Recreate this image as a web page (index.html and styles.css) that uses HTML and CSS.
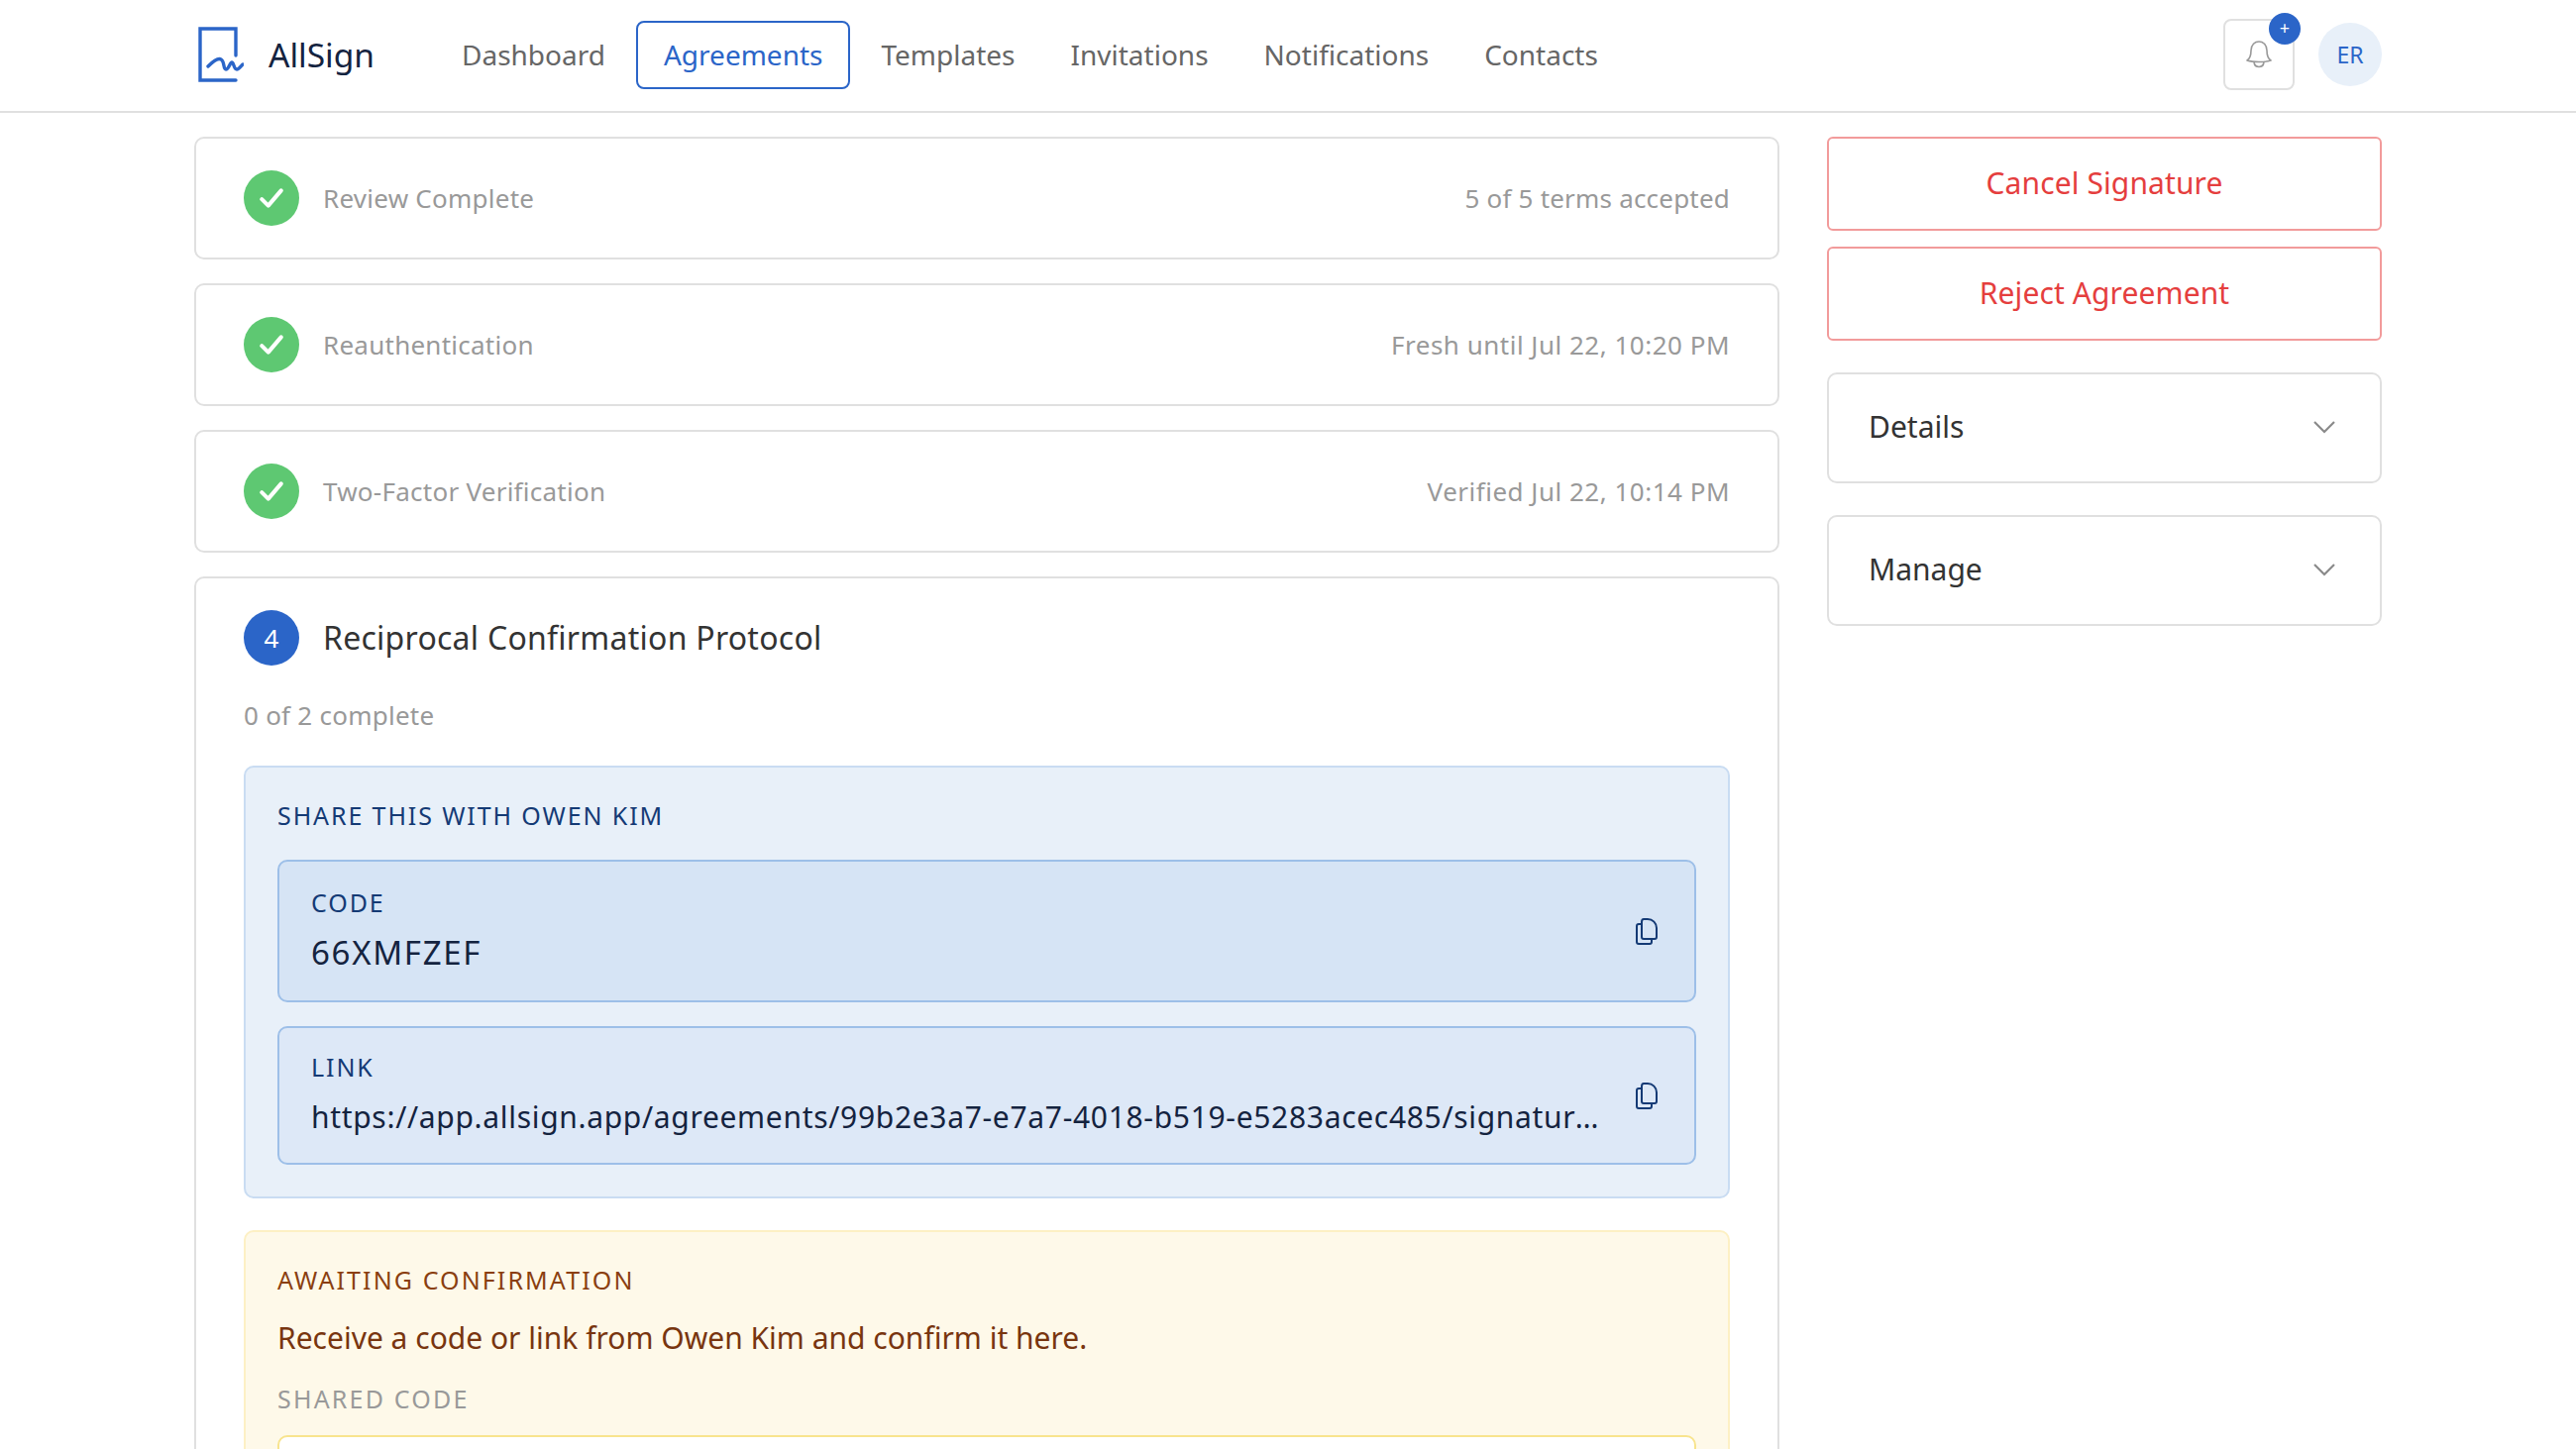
FILE: index.html
```html
<!DOCTYPE html>
<html lang="en">

<head>
    <meta charset="utf-8">
    <title>AllSign</title>
    <link rel="stylesheet" href="styles.css">
</head>

<body>
    <header class="topbar">
        <div class="brand">
            <svg class="logo" viewBox="0 0 46 56" fill="none">
                <path d="M38 29V2H2V54H38" stroke="#2b65c8" stroke-width="3.4" stroke-linecap="round" />
                <path d="M10 40C14 36 20 31 23 33C27 35 25 43 28 43C31 43 32 36 34 36C36 36 36 43 39 43C41 43 43 40 45 38"
                    stroke="#2b65c8" stroke-width="3.4" stroke-linecap="round" />
            </svg>
            <span class="brand-name">AllSign</span>
        </div>
        <nav class="nav">
            <a class="nav-item">Dashboard</a>
            <a class="nav-item active">Agreements</a>
            <a class="nav-item">Templates</a>
            <a class="nav-item">Invitations</a>
            <a class="nav-item">Notifications</a>
            <a class="nav-item">Contacts</a>
        </nav>
        <div class="bell-box">
            <svg class="bell" viewBox="0 0 28 30" fill="none">
                <path d="M2 21C5 19 6 16 6 11C6 5 10 2 14 2C18 2 22 5 22 11C22 16 23 19 26 21C20 23 8 23 2 21Z"
                    stroke="#999" stroke-width="1.6" stroke-linejoin="round" />
                <path d="M9 23C10 29 18 29 19 23" stroke="#999" stroke-width="1.6" />
            </svg>
            <span class="badge">+</span>
        </div>
        <div class="avatar">ER</div>
    </header>

    <main class="layout">
        <section class="steps">
            <div class="card step-done">
                <span class="circle green">
                    <svg class="check" viewBox="0 0 24 24" fill="none">
                        <path d="M3 13L9 19L21 5" stroke="#fff" stroke-width="3.8" stroke-linecap="round" stroke-linejoin="round" />
                    </svg>
                </span>
                <span class="step-name">Review Complete</span>
                <span class="step-note">5 of 5 terms accepted</span>
            </div>
            <div class="card step-done">
                <span class="circle green">
                    <svg class="check" viewBox="0 0 24 24" fill="none">
                        <path d="M3 13L9 19L21 5" stroke="#fff" stroke-width="3.8" stroke-linecap="round" stroke-linejoin="round" />
                    </svg>
                </span>
                <span class="step-name">Reauthentication</span>
                <span class="step-note date-note">Fresh until Jul 22, 10:20 PM</span>
            </div>
            <div class="card step-done">
                <span class="circle green">
                    <svg class="check" viewBox="0 0 24 24" fill="none">
                        <path d="M3 13L9 19L21 5" stroke="#fff" stroke-width="3.8" stroke-linecap="round" stroke-linejoin="round" />
                    </svg>
                </span>
                <span class="step-name">Two-Factor Verification</span>
                <span class="step-note date-note">Verified Jul 22, 10:14 PM</span>
            </div>

            <div class="card step-open">
                <div class="step-head">
                    <span class="circle blue">4</span>
                    <h2 class="step-title">Reciprocal Confirmation Protocol</h2>
                </div>
                <p class="progress">0 of 2 complete</p>

                <div class="panel share">
                    <div class="panel-label">SHARE THIS WITH OWEN KIM</div>
                    <div class="copy-box code-box">
                        <div class="copy-text">
                            <div class="copy-label">CODE</div>
                            <div class="copy-value code-value">66XMFZEF</div>
                        </div>
                        <svg class="copy-icon" viewBox="0 0 24 28" fill="none">
                            <path d="M7 5V20C7 21 8 22 9 22H20C21 22 22 21 22 20V11C22 6 18 2 13 2H9C8 2 7 3 7 5Z" stroke="#143a75" stroke-width="2" />
                            <path d="M7 7H4C3 7 2 8 2 9V25C2 26 3 27 4 27H15C16 27 17 26 17 25V22" stroke="#143a75" stroke-width="2" />
                        </svg>
                    </div>
                    <div class="copy-box link-box">
                        <div class="copy-text">
                            <div class="copy-label">LINK</div>
                            <div class="copy-value link-value">https://app.allsign.app/agreements/99b2e3a7-e7a7-4018-b519-e5283acec485/signature/confirm</div>
                        </div>
                        <svg class="copy-icon" viewBox="0 0 24 28" fill="none">
                            <path d="M7 5V20C7 21 8 22 9 22H20C21 22 22 21 22 20V11C22 6 18 2 13 2H9C8 2 7 3 7 5Z" stroke="#143a75" stroke-width="2" />
                            <path d="M7 7H4C3 7 2 8 2 9V25C2 26 3 27 4 27H15C16 27 17 26 17 25V22" stroke="#143a75" stroke-width="2" />
                        </svg>
                    </div>
                </div>

                <div class="panel await">
                    <div class="panel-label await-label">AWAITING CONFIRMATION</div>
                    <p class="await-text">Receive a code or link from Owen Kim and confirm it here.</p>
                    <div class="shared-label">SHARED CODE</div>
                    <div class="shared-input"></div>
                </div>
            </div>
        </section>

        <aside class="side">
            <button class="danger">Cancel Signature</button>
            <button class="danger">Reject Agreement</button>
            <div class="card fold first-fold">
                <span>Details</span>
                <svg class="chev" viewBox="0 0 24 14" fill="none">
                    <path d="M2 2L12 12L22 2" stroke="#8a8a8a" stroke-width="2.2" />
                </svg>
            </div>
            <div class="card fold">
                <span>Manage</span>
                <svg class="chev" viewBox="0 0 24 14" fill="none">
                    <path d="M2 2L12 12L22 2" stroke="#8a8a8a" stroke-width="2.2" />
                </svg>
            </div>
        </aside>
    </main>
</body>

</html>
```

FILE: styles.css
```css
* {
    box-sizing: border-box;
    margin: 0;
    padding: 0;
}

html,
body {
    height: 100%;
    overflow: hidden;
}

body {
    background-color: #ffffff;
    font-family: "Noto Sans", "Open Sans", sans-serif;
    font-size: 26px;
    color: #333333;
}

/* top bar */
.topbar {
    display: flex;
    align-items: center;
    height: 114px;
    padding: 0 196px 2px 200px;
    border-bottom: 2px solid #e0e0e0;
}

.brand {
    display: flex;
    align-items: center;
    gap: 25px;
    width: 238px;
}

.logo {
    width: 46px;
    height: 56px;
}

.brand-name {
    font-size: 33.5px;
    color: #14233f;
}

.nav {
    display: flex;
    align-items: center;
    flex: 1;
}

.nav-item {
    height: 69px;
    line-height: 64px;
    padding: 0 26px;
    font-size: 28px;
    color: #666666;
    border: 2px solid transparent;
    border-radius: 8px;
}

.nav-item.active {
    margin: 0 3px;
    color: #2b65c8;
    border-color: #2b65c8;
}

.bell-box {
    position: relative;
    display: flex;
    align-items: center;
    justify-content: center;
    width: 72px;
    height: 72px;
    margin-right: 24px;
    border: 2px solid #e0e0e0;
    border-radius: 8px;
}

.bell {
    width: 28px;
    height: 30px;
}

.badge {
    position: absolute;
    top: -8px;
    right: -8px;
    width: 32px;
    height: 32px;
    line-height: 30px;
    text-align: center;
    font-size: 18px;
    color: #ffffff;
    background-color: #2b65c8;
    border-radius: 50%;
}

.avatar {
    width: 64px;
    height: 64px;
    line-height: 64px;
    text-align: center;
    font-size: 23px;
    color: #2b65c8;
    background-color: #e8f0f9;
    border-radius: 50%;
}

/* page columns */
.layout {
    display: grid;
    grid-template-columns: 1600px 560px;
    gap: 48px;
    padding: 24px 196px 0;
}

.steps {
    display: flex;
    flex-direction: column;
    gap: 24px;
}

.card {
    border: 2px solid #e0e0e0;
    border-radius: 10px;
    background-color: #ffffff;
}

.step-done {
    display: flex;
    align-items: center;
    height: 124px;
    padding: 0 48px;
}

.circle {
    display: flex;
    align-items: center;
    justify-content: center;
    flex: none;
    width: 56px;
    height: 56px;
    border-radius: 50%;
    color: #ffffff;
}

.green {
    background-color: #5ec872;
}

.blue {
    background-color: #2b65c8;
    font-size: 26px;
}

.check {
    width: 26px;
    height: 26px;
}

.step-name {
    margin-left: 24px;
    margin-bottom: 1px;
    flex: 1;
    letter-spacing: 0.25px;
    color: #999999;
}

.step-note {
    margin-bottom: 1px;
    letter-spacing: 0.2px;
    color: #999999;
}

.date-note {
    letter-spacing: 0.5px;
}

.step-open {
    padding: 32px 48px 48px;
}

.step-head {
    display: flex;
    align-items: center;
    gap: 24px;
}

.step-title {
    margin-bottom: 2px;
    font-size: 32px;
    font-weight: 400;
    letter-spacing: 0.26px;
    color: #333333;
}

.progress {
    margin-top: 32px;
    line-height: 36px;
    letter-spacing: 0.25px;
    color: #999999;
}

/* share and await panels */
.panel {
    border: 2px solid #c9dcf2;
    border-radius: 10px;
    padding: 32px;
}

.share {
    margin-top: 33px;
    background-color: #e8f0f9;
}

.panel-label {
    margin-top: -2px;
    line-height: 36px;
    font-size: 25px;
    letter-spacing: 1.9px;
    color: #143a75;
}

.copy-box {
    display: flex;
    align-items: center;
    gap: 32px;
    margin-top: 24px;
    padding: 0 36px 0 32px;
    border: 2px solid #9dbfe8;
    border-radius: 10px;
}

.code-box {
    height: 144px;
    margin-top: 27px;
    background-color: #d6e4f5;
}

.link-box {
    height: 140px;
    background-color: #dde8f7;
}

.copy-text {
    flex: 1;
    min-width: 0;
    padding-bottom: 4px;
}

.copy-label {
    line-height: 34px;
    font-size: 25px;
    letter-spacing: 1.9px;
    color: #143a75;
}

.copy-value {
    margin-top: 14px;
    line-height: 40px;
    color: #14233f;
}

.code-value {
    font-size: 33px;
    letter-spacing: 1.7px;
}

.link-value {
    font-size: 30px;
    letter-spacing: 0.68px;
    white-space: nowrap;
    overflow: hidden;
    text-overflow: ellipsis;
}

.copy-icon {
    flex: none;
    width: 24px;
    height: 28px;
}

.await {
    margin-top: 32px;
    background-color: #fef9e9;
    border-color: #fdf0c4;
}

.await-label {
    letter-spacing: 2.1px;
    color: #8a3f10;
}

.await-text {
    margin-top: 21px;
    line-height: 40px;
    font-size: 30px;
    color: #78350f;
}

.shared-label {
    margin-top: 23px;
    line-height: 36px;
    font-size: 25px;
    letter-spacing: 2.2px;
    color: #999999;
}

.shared-input {
    height: 80px;
    margin-top: 19px;
    background-color: #ffffff;
    border: 2px solid #f8e48e;
    border-radius: 10px;
}

/* right column */
.side {
    display: flex;
    flex-direction: column;
}

.danger {
    height: 95px;
    margin-bottom: 16px;
    padding-bottom: 3px;
    font-family: inherit;
    font-size: 30px;
    letter-spacing: 0.1px;
    color: #e53e3e;
    background-color: #ffffff;
    border: 2px solid #f29b9b;
    border-radius: 6px;
}

.fold {
    display: flex;
    align-items: center;
    justify-content: space-between;
    height: 112px;
    margin-bottom: 32px;
    padding: 0 44px 3px 40px;
    font-size: 30px;
}

.first-fold {
    margin-top: 16px;
}

.chev {
    width: 24px;
    height: 14px;
}
```
